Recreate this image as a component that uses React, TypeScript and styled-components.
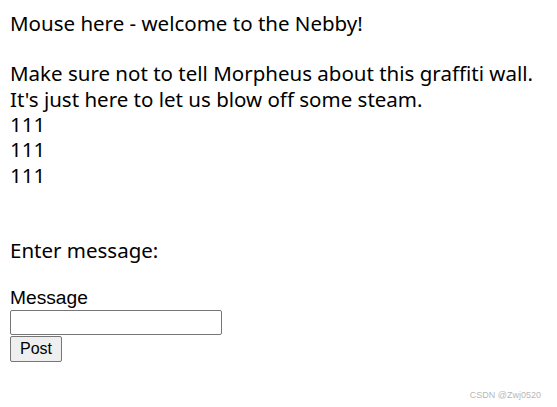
import React from "react";
import styled, { createGlobalStyle } from "styled-components";

const GlobalStyle = createGlobalStyle`
  html, body {
    margin: 0;
    padding: 0;
    background: #ffffff;
  }
  body {
    width: 557px;
    height: 407px;
    overflow: hidden;
  }
`;

const Page = styled.main`
  position: relative;
  box-sizing: border-box;
  width: 557px;
  height: 407px;
  padding: 10.8px 0 0 10px;
  color: #000000;
  font-family: "Noto Sans", "Open Sans", sans-serif;
  font-size: 20.5px;
  line-height: 25.3px;
  font-variant-ligatures: none;
`;

const TextLine = styled.div<{ $gapBefore?: number }>`
  height: 25.3px;
  white-space: nowrap;
  margin-top: ${(p) => (p.$gapBefore ?? 0) * 25.3}px;
`;

const MessageForm = styled.form`
  display: flex;
  flex-direction: column;
  align-items: flex-start;
  margin: 23px 0 0;
  font-family: "Liberation Sans", Arial, sans-serif;
  font-size: 19.2px;
  line-height: 22px;
`;

const FieldLabel = styled.label`
  display: block;
  height: 22.4px;
`;

const TextInput = styled.input`
  box-sizing: border-box;
  width: 212px;
  height: 25px;
  margin: 0.6px 0 0;
  padding: 1px 2px;
  border: 1px solid #767676;
  border-radius: 2px;
  background: #ffffff;
  font-family: "Liberation Sans", Arial, sans-serif;
  font-size: 16px;
`;

const PostButton = styled.button`
  box-sizing: border-box;
  width: 52px;
  height: 26px;
  margin: 1px 0 0;
  padding: 0;
  border: 1px solid #767676;
  border-radius: 2px;
  background: #efefef;
  color: #000000;
  font-family: "Liberation Sans", Arial, sans-serif;
  font-size: 16px;
  line-height: 22px;
`;

const Watermark = styled.span`
  position: absolute;
  right: 16px;
  bottom: 6px;
  color: #b8b8b8;
  font-family: "Liberation Sans", Arial, sans-serif;
  font-size: 9px;
  line-height: 11px;
  white-space: nowrap;
`;

const notes = [
  "Make sure not to tell Morpheus about this graffiti wall.",
  "It's just here to let us blow off some steam.",
];

const messages = ["111", "111", "111"];

export default function App() {
  return (
    <>
      <GlobalStyle />
      <Page>
        <TextLine>Mouse here - welcome to the Nebby!</TextLine>
        {notes.map((n, i) => (
          <TextLine key={n} $gapBefore={i === 0 ? 1 : 0}>
            {n}
          </TextLine>
        ))}
        {messages.map((m, i) => (
          <TextLine key={i}>{m}</TextLine>
        ))}
        <TextLine $gapBefore={2}>Enter message:</TextLine>
        <MessageForm onSubmit={(e) => e.preventDefault()}>
          <FieldLabel htmlFor="msg">Message</FieldLabel>
          <TextInput id="msg" type="text" />
          <PostButton type="submit">Post</PostButton>
        </MessageForm>
        <Watermark>CSDN @Zwj0520</Watermark>
      </Page>
    </>
  );
}
